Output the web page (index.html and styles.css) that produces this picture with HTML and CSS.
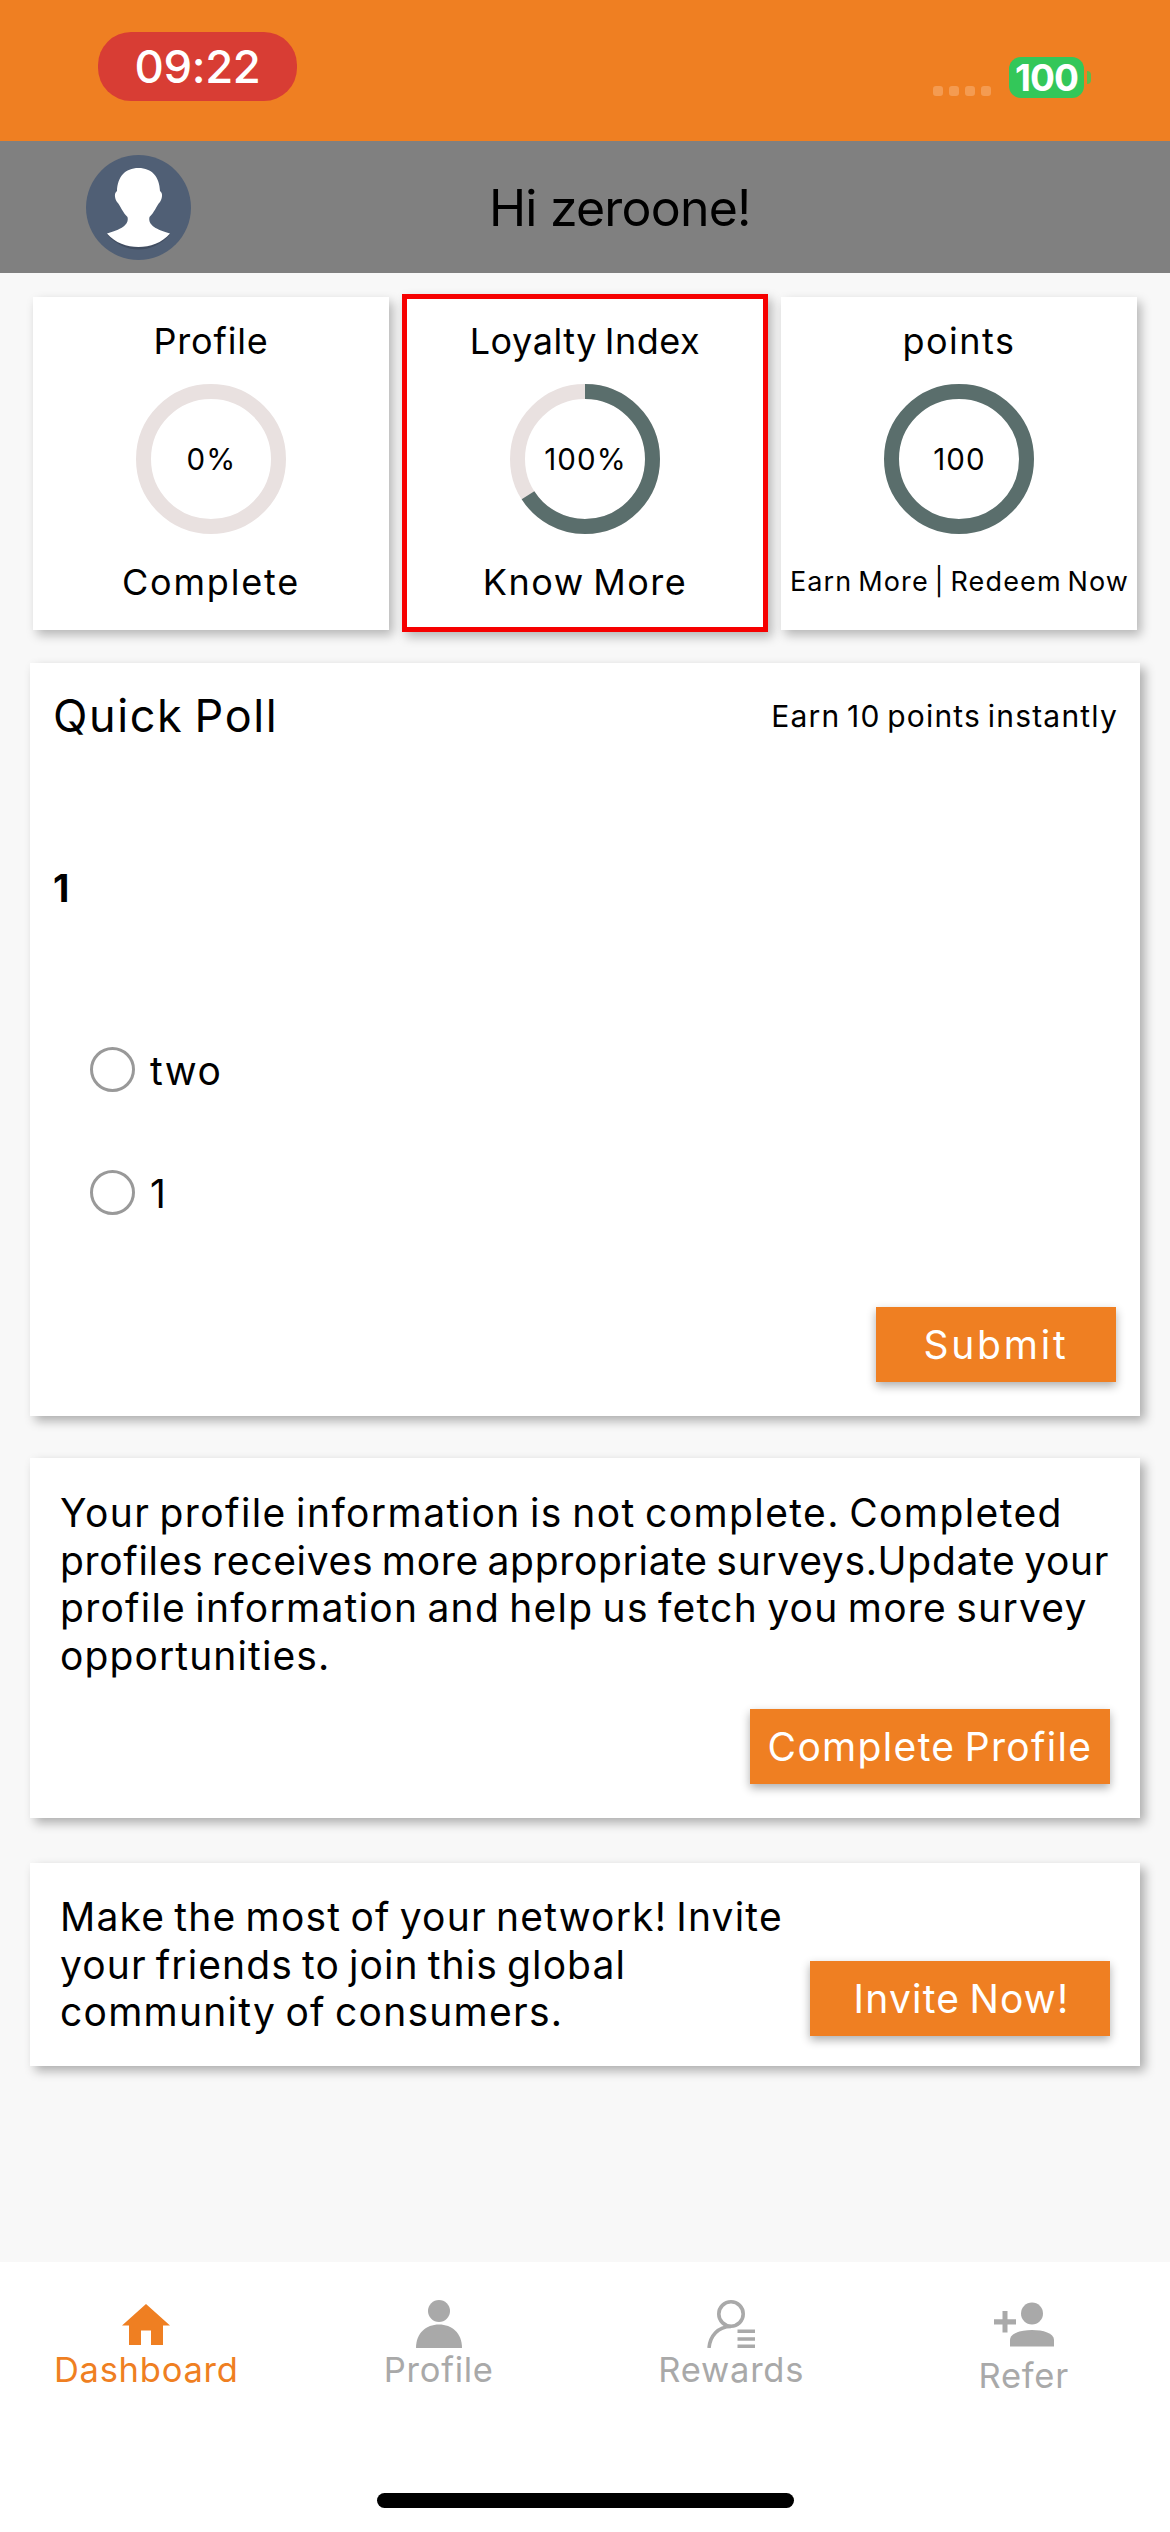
FILE: index.html
```
<!DOCTYPE html>
<html lang="en">
<head>
<meta charset="utf-8">
<title>Dashboard</title>
<link rel="stylesheet" href="styles.css">
</head>
<body>
<div class="screen">
  <div class="status">
    <div class="time">09:22</div>
    <div class="status-right">
      <div class="signal"><i></i><i></i><i></i><i></i></div>
      <div class="battery">100</div>
      <div class="battery-nub"></div>
    </div>
  </div>

  <header class="greeting">
    <svg class="avatar" viewBox="0 0 105 105">
      <circle cx="52.5" cy="52.5" r="52.5" fill="#505f75"/>
      <path d="M21 79.500C30 90 42 94.500 52.500 94.500S75 90 84 79.500Z" fill="#414d61"/>
      <path d="M52.500 13C39 13 31.500 22 31 36C28 38 28.500 43 31 47C34 50 37 58 41.500 62C43.500 70 34 75 21 78.500C29 88 41 92 52.500 92S76 88 84 78.500C71 75 61.500 70 63.500 62C68 58 71 50 74 47C76.500 43 77 38 74 36C73.500 22 66 13 52.500 13Z" fill="#fff"/>
    </svg>
    <h1 class="hello">Hi zeroone!</h1>
  </header>

  <main class="content">
    <section class="stats">
      <div class="stat">
        <div class="stat-label ls-a">Profile</div>
        <div class="ring">
          <svg viewBox="0 0 150 150"><circle class="track" cx="75" cy="75" r="67.5"/></svg>
          <span>0%</span>
        </div>
        <div class="stat-label ls-c">Complete</div>
      </div>
      <div class="stat selected">
        <div class="stat-label ls-d">Loyalty Index</div>
        <div class="ring">
          <svg viewBox="0 0 150 150"><circle class="track" cx="75" cy="75" r="67.5"/><circle class="bar" cx="75" cy="75" r="67.5" pathLength="100" stroke-dasharray="66 100" transform="rotate(-90 75 75)"/></svg>
          <span>100%</span>
        </div>
        <div class="stat-label ls-b">Know More</div>
      </div>
      <div class="stat">
        <div class="stat-label ls-b">points</div>
        <div class="ring">
          <svg viewBox="0 0 150 150"><circle class="bar" cx="75" cy="75" r="67.5"/></svg>
          <span>100</span>
        </div>
        <div class="stat-label small">Earn More | Redeem Now</div>
      </div>
    </section>

    <section class="card poll">
      <div class="poll-head"><h2>Quick Poll</h2><p>Earn 10 points instantly</p></div>
      <p class="question">1</p>
      <div class="options">
        <label class="option"><i></i><span>two</span></label>
        <label class="option"><i></i><span>1</span></label>
      </div>
      <button class="btn submit">Submit</button>
    </section>

    <section class="card complete">
      <p class="para">
        <span class="l1">Your profile information is not complete. Completed</span>
        <span class="l2">profiles receives more appropriate surveys.Update your</span>
        <span class="l3">profile information and help us fetch you more survey</span>
        <span class="l4">opportunities.</span>
      </p>
      <button class="btn complete-btn">Complete Profile</button>
    </section>

    <section class="card invite">
      <p class="para">
        <span class="l5">Make the most of your network! Invite</span>
        <span class="l4">your friends to join this global</span>
        <span class="l3">community of consumers.</span>
      </p>
      <button class="btn invite-btn">Invite Now!</button>
    </section>
  </main>

  <nav class="nav">
    <div class="tabs">
      <div class="tab active">
        <svg width="48" height="48" viewBox="0 0 48 48"><path d="M24 4L48 25.500H41V45H29V30.500H19V45H7V25.500H0Z"/></svg>
        <span>Dashboard</span>
      </div>
      <div class="tab">
        <svg width="48" height="48" viewBox="0 0 48 48"><circle cx="24" cy="11" r="11"/><path d="M1 48C1 33 11 24.500 24 24.500S47 33 47 48Z"/></svg>
        <span>Profile</span>
      </div>
      <div class="tab">
        <svg width="48" height="48" viewBox="0 0 48 48"><g fill="none" stroke="currentColor" stroke-width="3.600"><circle cx="24" cy="14" r="12.200"/><path d="M2 48C3 36 11 26.500 24 26.500"/><path d="M30.500 31.300H48M30.500 39H48M30.500 46.300H48"/></g></svg>
        <span>Rewards</span>
      </div>
      <div class="tab refer">
        <svg width="60" height="48" viewBox="0 0 60 48"><circle cx="38" cy="13.500" r="11"/><path d="M16 46.500V40C16 33 27 30 38 30S60 33 60 40V46.500Z"/><path d="M8.500 11H13.500V19.300H22V24.500H13.500V32.500H8.500V24.500H0V19.300H8.500Z"/></svg>
        <span>Refer</span>
      </div>
    </div>
    <div class="home-bar"></div>
  </nav>
</div>
</body>
</html>
```
FILE: styles.css
```
* { box-sizing: border-box; margin: 0; padding: 0; }
body { width: 1170px; font-family: Inter, "Open Sans", sans-serif; color: #000; background: #f8f8f8; }
.screen { display: flex; flex-direction: column; width: 1170px; height: 2532px; overflow: hidden; }
svg { display: block; flex: none; }

.status { display: flex; justify-content: space-between; align-items: flex-start; height: 141px; padding: 32px 79px 0 98px; background: #ef7f22; color: #fff; }
.time { width: 199px; height: 69px; border-radius: 33px; background: #d83d34; font-size: 45.5px; line-height: 70px; font-weight: 500; letter-spacing: -.4px; text-align: center; }
.status-right { display: flex; align-items: flex-start; padding-top: 25px; }
.signal { display: flex; gap: 6px; padding-top: 29px; margin-right: 18px; }
.signal i { width: 10px; height: 10px; border-radius: 3px; background: #f49b51; }
.battery { width: 75px; height: 41px; border-radius: 12px; background: #33c759; font-size: 37px; line-height: 41px; font-weight: 700; letter-spacing: -1px; text-align: center; }
.battery-nub { width: 4px; height: 13px; margin: 14px 0 0 3px; border-radius: 0 4px 4px 0; background: #5dbd4a; }

.greeting { display: flex; align-items: center; height: 132px; padding-left: 86px; background: #808080; }
.avatar { width: 105px; height: 105px; }
.hello { margin-left: 298px; padding-top: 1px; font-size: 50px; font-weight: 400; letter-spacing: -.8px; white-space: nowrap; }

.content { display: flex; flex-direction: column; flex: 1; padding: 24px 30px 0; word-spacing: -3px; }
.stats { display: grid; grid-template-columns: repeat(3, 356px); gap: 18px; padding-left: 3px; height: 333px; }
.stat { display: flex; flex-direction: column; align-items: center; padding-top: 22px; background: #fff; box-shadow: 4px 5px 10px rgba(0, 0, 0, .27); }
.selected { margin: -3px -5px -2px; padding-top: 20px; border: 5px solid #f60000; }
.stat-label { font-size: 36px; line-height: 44px; white-space: nowrap; }
.ls-a { letter-spacing: .85px; }
.ls-b { letter-spacing: 1.5px; }
.ls-c { letter-spacing: 1.8px; }
.ls-d { letter-spacing: .55px; }
.small { font-size: 27px; letter-spacing: 1.15px; padding-left: 1px; }
.ring { display: grid; place-items: center; width: 150px; height: 150px; margin: 21px 0 26px; }
.ring > * { grid-area: 1 / 1; }
.ring svg { width: 150px; height: 150px; }
.ring span { padding-left: 1px; font-size: 29.5px; letter-spacing: 1.1px; }
.track, .bar { fill: none; stroke-width: 15; stroke: #e9e1e0; }
.bar { stroke: #5a6e6c; }

.card { background: #fff; box-shadow: 5px 5px 10px rgba(0, 0, 0, .3); }
.poll { display: flex; flex-direction: column; height: 753px; margin-top: 33px; padding: 25px 24px 0 23px; }
.poll-head { display: flex; justify-content: space-between; line-height: 56px; }
.poll-head h2 { font-size: 45px; font-weight: 400; letter-spacing: 1.6px; }
.poll-head p { font-size: 30px; letter-spacing: 1.2px; margin-right: -2px; }
.question { margin-top: 120px; font-size: 38px; line-height: 48px; font-weight: 700; }
.options { display: flex; flex-direction: column; gap: 75px; margin: 135px 0 89px 37px; }
.option { display: flex; gap: 15px; height: 48px; font-size: 39px; line-height: 48px; letter-spacing: 1.5px; }
.option i { width: 45px; height: 45px; border: 3px solid #999; border-radius: 50%; }

.btn { height: 75px; border: 0; background: #ef7f22; color: #fff; font: 400 39px/75px Inter, "Open Sans", sans-serif; text-align: center; white-space: nowrap; word-spacing: -3px; box-shadow: 0 4px 9px rgba(0, 0, 0, .32); }
.submit { align-self: flex-end; width: 240px; letter-spacing: 2.8px; }
.complete-btn { align-self: flex-end; width: 360px; letter-spacing: 1.33px; margin-top: 30px; }
.invite-btn { align-self: flex-end; width: 300px; padding-left: 3px; letter-spacing: 1.2px; }

.complete { display: flex; flex-direction: column; height: 360px; margin-top: 42px; padding: 31px 30px 0; }
.invite { display: flex; justify-content: space-between; height: 203px; margin-top: 45px; padding: 30px; }
.para { font-size: 39px; line-height: 47.5px; }
.para span { display: block; white-space: nowrap; }
.l1 { letter-spacing: 1.4px; }
.l2 { letter-spacing: .68px; }
.l3 { letter-spacing: 1.25px; }
.l4 { letter-spacing: 1.1px; }
.l5 { letter-spacing: 1.19px; }

.nav { display: flex; flex-direction: column; align-items: center; height: 270px; background: #fff; }
.tabs { display: grid; grid-template-columns: repeat(4, 1fr); width: 100%; height: 231px; padding-top: 38px; }
.tab { display: flex; flex-direction: column; align-items: center; color: #a9a9a9; fill: currentColor; font-size: 34.5px; line-height: 44px; letter-spacing: .75px; }
.active { color: #ef7f22; }
.refer span { margin-top: 6px; }
.home-bar { width: 417px; height: 15px; border-radius: 8px; background: #000; }
```
